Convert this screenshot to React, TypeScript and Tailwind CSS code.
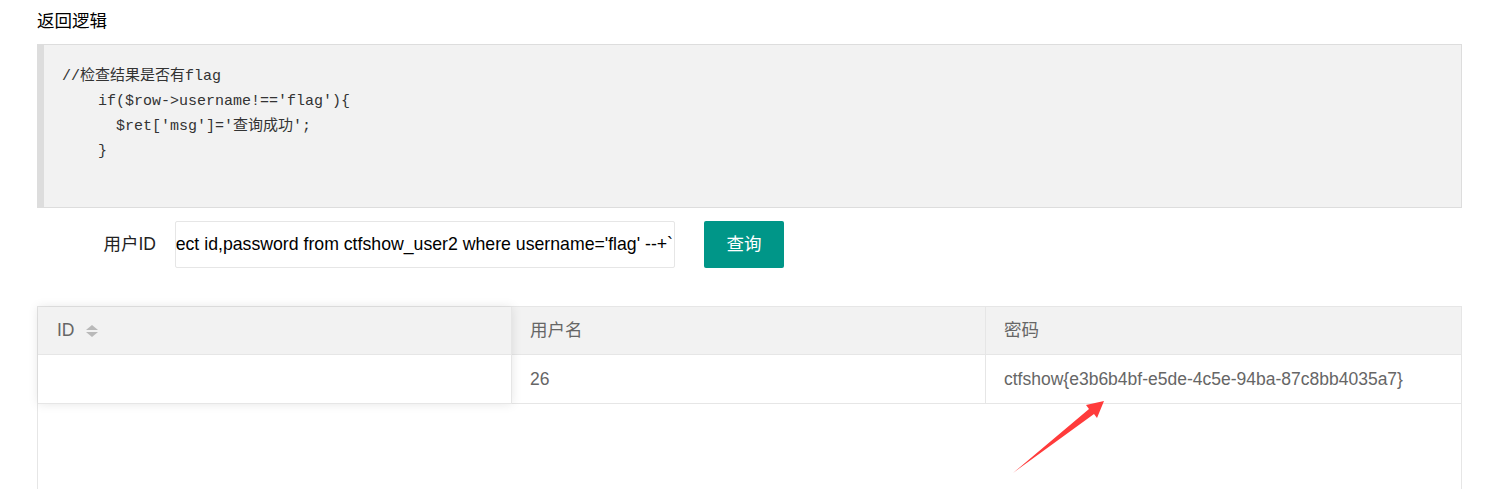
import React from 'react';

const codeLines = [
  '//检查结果是否有flag',
  "    if($row->username!=='flag'){",
  "      $ret['msg']='查询成功';",
  '    }',
  '',
];

const SortIcon: React.FC = () => (
  <svg width="12" height="12" viewBox="0 0 12 12" className="ml-[11px]">
    <polygon points="6,0 12,5 0,5" fill="#b9b9b9" />
    <polygon points="0,7 12,7 6,12" fill="#b9b9b9" />
  </svg>
);

const App: React.FC = () => {
  return (
    <div className="relative min-h-screen overflow-hidden bg-white pl-[37px] pr-[37px] pt-[9px] font-['Liberation_Sans','Noto_Sans_CJK_SC',sans-serif]">
      {/* Title */}
      <div className="h-[25px] text-[17.5px] leading-[25px] text-black">返回逻辑</div>

      {/* Code block */}
      <div className="mt-[10px] h-[164px] w-[1425px] border border-l-[7px] border-[#dddddd] bg-[#f2f2f2] pl-[18px] pt-[19px]">
        <pre className="m-0 font-['Liberation_Mono','Noto_Sans_CJK_SC',monospace] text-[15px] leading-[25px] text-[#333]">
          {codeLines.map((line, i) => (
            <div key={i} className="h-[25px]">{line}</div>
          ))}
        </pre>
      </div>

      {/* Form row */}
      <div className="mt-[13px] flex items-center">
        <div className="w-[138px] pr-[19px] text-right text-[17.5px] text-[#222]">用户ID</div>
        <div className="flex h-[47px] w-[500px] items-center justify-end overflow-hidden rounded-[2px] border border-[#e6e6e6] bg-white pr-[1px]">
          <span className="whitespace-nowrap text-[17.7px] text-black">
            elect id,password from ctfshow_user2 where username='flag' --+`
          </span>
        </div>
        <button className="ml-[29px] flex h-[47px] w-[80px] items-center justify-center rounded-[2px] bg-[#009688] text-[17.5px] text-white">
          查询
        </button>
      </div>

      {/* Table */}
      <div className="mt-[38px] w-[1425px] border border-[#e6e6e6] text-[17.5px] text-[#666]">
        <div className="flex">
          <div className="relative z-10 w-[474px] border-r border-[#e6e6e6] bg-white shadow-[0_0_10px_rgba(0,0,0,0.1)]">
            <div className="flex h-[48px] items-center border-b border-[#e6e6e6] bg-[#f2f2f2] pl-[19px]">
              ID
              <SortIcon />
            </div>
            <div className="h-[49px] border-b border-[#e6e6e6] bg-white"></div>
          </div>
          <div className="w-[474px] border-r border-[#e6e6e6]">
            <div className="flex h-[48px] items-center border-b border-[#e6e6e6] bg-[#f2f2f2] pl-[18px]">用户名</div>
            <div className="flex h-[49px] items-center border-b border-[#e6e6e6] pl-[18px]">26</div>
          </div>
          <div className="flex-1">
            <div className="flex h-[48px] items-center border-b border-[#e6e6e6] bg-[#f2f2f2] pl-[18px]">密码</div>
            <div className="flex h-[49px] items-center border-b border-[#e6e6e6] pl-[18px]">
              ctfshow{'{'}e3b6b4bf-e5de-4c5e-94ba-87c8bb4035a7{'}'}
            </div>
          </div>
        </div>
        <div className="h-[200px]"></div>
      </div>

      {/* Red annotation arrow */}
      <svg
        className="pointer-events-none absolute left-0 top-0"
        width="1499"
        height="489"
        viewBox="0 0 1499 489"
      >
        <polygon
          points="1013,473 1089,409 1086,405 1104,401 1097,418 1094,414"
          fill="#ff3b3b"
        />
      </svg>
    </div>
  );
};

export default App;
